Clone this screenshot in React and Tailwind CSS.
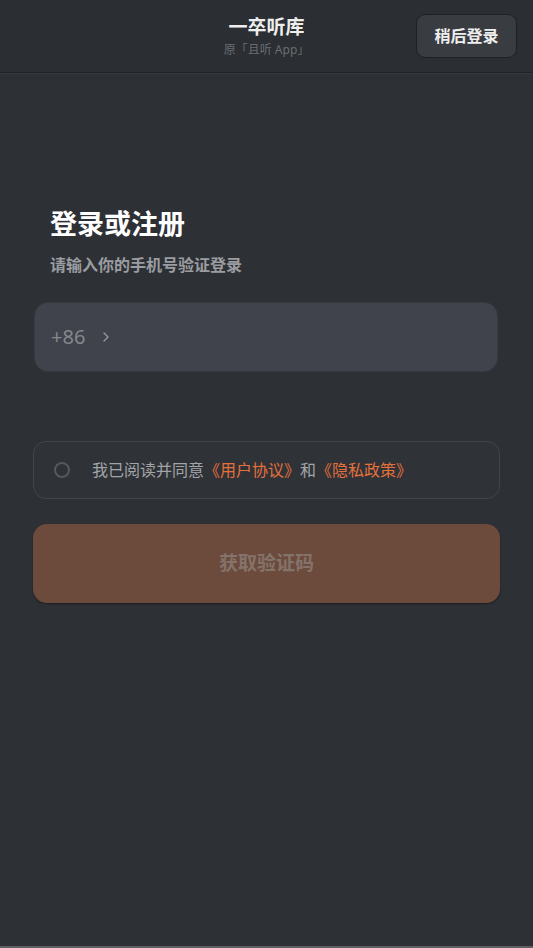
import React from 'react';
import { ChevronRight } from 'lucide-react';

const App = () => {
  return (
    <div
      className="min-h-screen h-[948px] bg-[#2d3035] flex flex-col"
      style={{ fontFamily: '"Noto Sans", "Noto Sans CJK SC", sans-serif' }}
    >
      {/* Header */}
      <header className="relative h-[73px] bg-[#2b2e33] border-b border-[#212328] shadow-[0_1px_0_#35383d] flex flex-col items-center justify-center gap-[1px]">
        <div className="text-[19px] leading-[26px] font-bold text-[#eeeeee]">一卒听库</div>
        <div className="text-[12px] leading-[17px] text-[#6a6d72]">原「且听 App」</div>
        <button className="absolute right-[16px] top-[14px] w-[101px] h-[44px] rounded-[9px] bg-[#393c41] border border-[#1e2024] text-[16px] font-bold text-[#eeeeee]">
          稍后登录
        </button>
      </header>

      {/* Body */}
      <main className="flex-1 px-[33px] pt-[133px]">
        <h1 className="pl-[17px] text-[27px] leading-[36px] font-bold text-white">登录或注册</h1>
        <p className="pl-[17px] mt-[13px] text-[16px] leading-[20px] font-bold text-[#9a9ca0]">请输入你的手机号验证登录</p>

        <div className="mt-[27px] ml-[1px] mr-[2px] h-[70px] rounded-[14px] bg-[#40434b] border border-[#373a40] flex items-center pl-[16px]">
          <span className="text-[20px] text-[#85888d]">+86</span>
          <ChevronRight className="ml-[13px] w-[16px] h-[16px] text-[#8f9297]" strokeWidth={2.2} />
        </div>

        <div className="mt-[69px] h-[58px] rounded-[13px] border border-[#42454b] bg-[#2f3237] flex items-center pl-[20px]">
          <span className="w-[16px] h-[16px] rounded-full border-2 border-[#55585d]"></span>
          <span className="ml-[22px] text-[16px] text-[#a2a4a8]">
            我已阅读并同意<span className="text-[#e4703b]">《用户协议》</span>和<span className="text-[#e4703b]">《隐私政策》</span>
          </span>
        </div>

        <button className="mt-[25px] w-full h-[79px] rounded-[14px] bg-[#6c4b3c] shadow-[0_1px_2px_rgba(0,0,0,0.4)] text-[19px] font-bold text-[#84736b]">
          获取验证码
        </button>
      </main>

      <div className="h-[2px] bg-[#5c5f64]"></div>
    </div>
  );
};

export default App;
